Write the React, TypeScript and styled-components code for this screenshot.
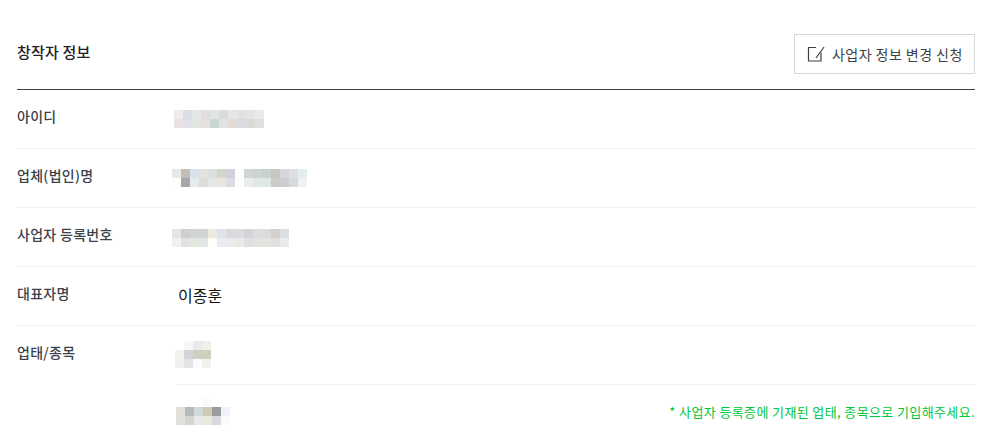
import React from 'react';
import styled, { createGlobalStyle } from 'styled-components';

const Global = createGlobalStyle`
  html, body { margin: 0; padding: 0; background: #fff; height: 440px; overflow: hidden; }
  body { font-family: "Noto Sans CJK KR", "Noto Sans", sans-serif; }
`;

const Page = styled.div`
  padding: 0 14px 0 17px;
  height: 440px;
  overflow: hidden;
`;
const Header = styled.header`
  box-sizing: border-box;
  display: flex;
  justify-content: space-between;
  align-items: flex-start;
  border-bottom: 1px solid #3c4249;
  height: 90px;
`;
const Title = styled.h2`
  margin: 41px 0 0;
  font-size: 15px;
  line-height: 22px;
  font-weight: 500;
  letter-spacing: 0.2px;
  color: #222;
`;
const EditButton = styled.button`
  margin-top: 34px;
  width: 181px;
  height: 40px;
  box-sizing: border-box;
  display: flex;
  align-items: center;
  gap: 7px;
  padding: 0 0 0 12px;
  background: #fff;
  border: 1px solid #d5d9dc;
  font-family: inherit;
  font-size: 14px;
  letter-spacing: 0.45px;
  color: #3c4249;
`;
const Row = styled.div`
  display: flex;
  border-bottom: 1px solid #f0f0f0;
  height: 59px;
  box-sizing: border-box;
`;
const Label = styled.div`
  width: 160px;
  flex: none;
  padding-top: 16px;
  font-size: 14px;
  line-height: 20px;
  font-weight: 500;
  letter-spacing: 0.3px;
  color: #3c4249;
`;
const Value = styled.div`
  flex: 1;
  min-width: 0;
`;
const MosaicWrap = styled.svg<{ $x: number; $y: number }>`
  display: block;
  margin-left: ${p => p.$x}px;
  margin-top: ${p => p.$y}px;
`;
const Name = styled.div`
  padding: 16px 0 0 1px;
  font-size: 16px;
  line-height: 24px;
  color: #111;
`;
const MultiRow = styled.div`
  display: flex;
  height: 115px;
`;
const SubRow = styled.div`
  display: flow-root;
  height: 59px;
  box-sizing: border-box;
  border-bottom: 1px solid #f0f0f0;
`;
const SubRowLast = styled.div`
  height: 56px;
  display: flex;
  justify-content: space-between;
  align-items: flex-start;
`;
const Note = styled.p`
  margin: 18px 0 0;
  font-size: 13px;
  line-height: 18px;
  letter-spacing: 0.38px;
  color: #00c73c;
`;

const Mosaic = ({ rows, x, y }: { rows: string[][]; x: number; y: number }) => {
  const w = rows[0].length * 9;
  const h = rows.length * 9;
  return (
    <MosaicWrap $x={x} $y={y} width={w} height={h} viewBox={`0 0 ${w} ${h}`} shapeRendering="crispEdges">
      {rows.map((r, j) =>
        r.map((c, i) => <rect key={`${i}-${j}`} x={i * 9} y={j * 9} width={9} height={9} fill={c} />)
      )}
    </MosaicWrap>
  );
};

const id = [
  ['#efebeb', '#dcdce6', '#e4e7e7', '#e2dcda', '#e0e5e6', '#d9dedd', '#e6e6ea', '#e3e0e4', '#e4e4e4', '#e9eaec'],
  ['#e9e1e4', '#e0dfea', '#e2e5e0', '#e6dfdd', '#c9d6d6', '#dfe3e2', '#e2dcd9', '#dbdbe0', '#dcdad8', '#dfe0e4'],
];
const corp = [
  ['#e8e8e6', '#c2bfb2', '#d8e2ea', '#e3e3dd', '#dbe0de', '#d4d6cc', '#d2d0da', '#ffffff', '#d3d4d6', '#c9d6d2', '#c6d2cc', '#c7c6c0', '#d6d7dc', '#dedfe2', '#e4eeec'],
  ['#fffdf9', '#a8a6a8', '#e6e9ee', '#dcdcd8', '#e2e6e4', '#e8e4de', '#dcdbe4', '#fffffb', '#ebecf0', '#dfe8e8', '#dfe6e6', '#cbcac4', '#cccdd2', '#d8d9dc', '#eef2f2'],
];
const biz = [
  ['#e4e4e0', '#cfcdd0', '#d1d4d0', '#d0d4d4', '#ecebe2', '#e1e3ea', '#d9d9df', '#dedadd', '#d5d3da', '#dededa', '#dcdadd', '#d2cfca', '#dbdfe0'],
  ['#f0f0ec', '#e0e3e2', '#e4e6e0', '#e2e7e6', '#fffdf8', '#e9ebf0', '#e8ecee', '#ebe8e6', '#e0dfe2', '#e2e2de', '#e2e4e2', '#e0dfe0', '#e8eaec'],
];
const cat1 = [
  ['#ffffff', '#f7f7f7', '#e9eaea', '#f0f1ea'],
  ['#f3f2f0', '#d5d2da', '#cfcfc0', '#d0d1bc'],
  ['#f0f0ee', '#e3e3e6', '#fafcfe', '#f0f2ec'],
];
const cat2 = [
  ['#ffffff', '#ffffff', '#ffffff', '#fbfbf7', '#ffffff', '#ffffff'],
  ['#e2dfd9', '#b5babd', '#d2dad9', '#cdcbb8', '#9a9b9d', '#eff3f7'],
  ['#e0e0de', '#d2d5d0', '#e7e9e8', '#ebe9da', '#d6dae0', '#f9fbfd'],
];

const EditIcon = () => (
  <svg width="18" height="18" viewBox="0 0 18 18" fill="none" stroke="#3c4249" strokeWidth="1.2">
    <path d="M14 7.500V16H1.500V2.500H9" />
    <path d="M9 13L17 2" strokeWidth="1.200" />
  </svg>
);

export default function App() {
  return (
    <Page>
      <Global />
      <Header>
        <Title>창작자 정보</Title>
        <EditButton type="button">
          <EditIcon />
          사업자 정보 변경 신청
        </EditButton>
      </Header>
      <Row>
        <Label>아이디</Label>
        <Value><Mosaic rows={id} x={-3} y={20} /></Value>
      </Row>
      <Row>
        <Label>업체(법인)명</Label>
        <Value><Mosaic rows={corp} x={-5} y={20} /></Value>
      </Row>
      <Row>
        <Label>사업자 등록번호</Label>
        <Value><Mosaic rows={biz} x={-5} y={21} /></Value>
      </Row>
      <Row>
        <Label>대표자명</Label>
        <Value><Name>이종훈</Name></Value>
      </Row>
      <MultiRow>
        <Label>업태/종목</Label>
        <Value>
          <SubRow><Mosaic rows={cat1} x={-2} y={15} /></SubRow>
          <SubRowLast>
            <Mosaic rows={cat2} x={-1} y={13} />
            <Note>* 사업자 등록증에 기재된 업태, 종목으로 기입해주세요.</Note>
          </SubRowLast>
        </Value>
      </MultiRow>
    </Page>
  );
}
